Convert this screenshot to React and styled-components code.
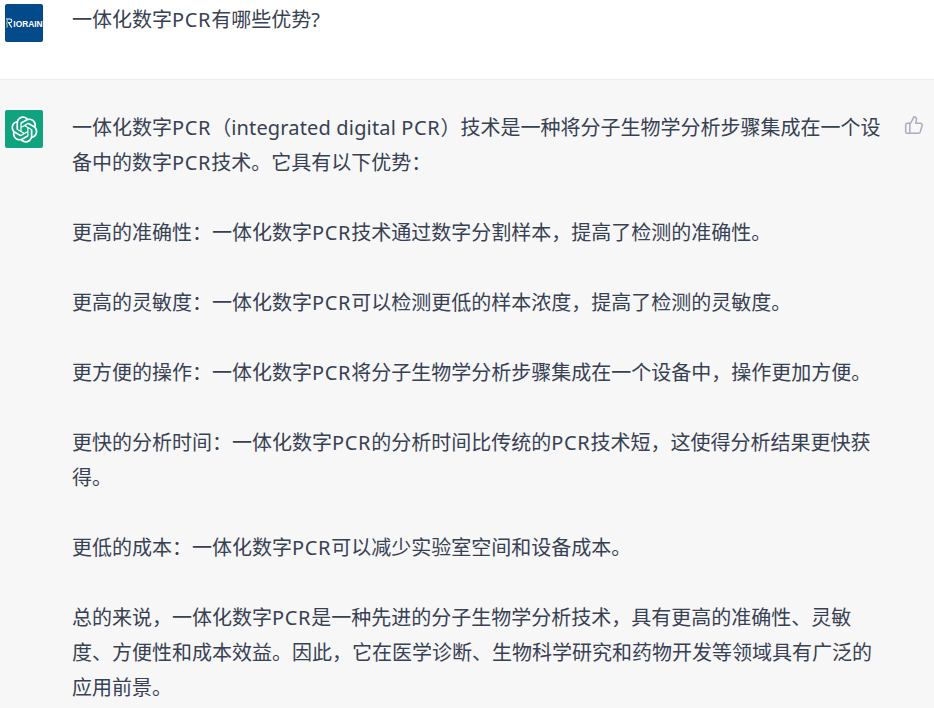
import styled, { createGlobalStyle } from 'styled-components';
import { ThumbsUp } from 'lucide-react';

const GlobalStyle = createGlobalStyle`
  html, body {
    margin: 0;
    padding: 0;
    background: #f7f7f8;
  }
  body {
    width: 934px;
    height: 708px;
    overflow: hidden;
    font-family: 'Noto Sans', 'Noto Sans CJK SC', sans-serif;
    color: #374151;
  }
`;

const Row = styled.div`
  display: flex;
  box-sizing: border-box;
  background: ${props => (props.answer ? '#f7f7f8' : '#ffffff')};
  border-bottom: ${props => (props.answer ? 'none' : '1px solid #ececf1')};
  height: ${props => (props.answer ? 'auto' : '80px')};
  padding: ${props => (props.answer ? '30px 0 0 5px' : '4px 0 0 5px')};
`;

const Avatar = styled.div`
  flex: none;
  width: 38px;
  height: 38px;
  border-radius: 2px;
  display: flex;
  align-items: center;
  justify-content: center;
  color: #ffffff;
  background: ${props => props.bg};
`;

const Brand = styled.span`
  display: flex;
  align-items: flex-end;
  font-family: 'Liberation Sans', sans-serif;
  font-size: 8.4px;
  line-height: 8px;
  font-weight: 700;
  white-space: nowrap;
`;

const Question = styled.div`
  margin: -2px 0 0 29px;
  font-size: 20px;
  line-height: 35px;
`;

const Body = styled.div`
  flex: none;
  width: 812px;
  margin-left: 29px;
  font-size: 20px;
  line-height: 35px;
`;

const Paragraph = styled.p`
  margin: 0 0 35px;
`;

// the latin runs are a little wider in the screenshot than in Noto Sans
const Pcr = styled.span`
  letter-spacing: 0.67px;
`;

const Latin = styled.span`
  letter-spacing: 0.16px;
`;

const Like = styled.div`
  flex: none;
  margin: 5px 0 0 20px;
  color: #acacbe;
  display: flex;
`;

export default function App() {
  return (
    <>
      <GlobalStyle />
      <Row>
        <Avatar bg="#034a8a">
          <Brand>
            <svg width="8" height="10" viewBox="0 0 8 10" fill="none">
              <path d="M1 1 H5 C7.4 1 7.4 4.6 5 4.6 H3.5 L6.8 9.6" stroke="#ffffff" strokeWidth="1.1" />
              <path d="M2 1.5 C3.4 3.4 0.8 5 2 6.8 C2.6 7.8 2.4 8.8 1.6 9.6" stroke="#9fd3a6" strokeWidth="1.1" />
            </svg>
            IORAIN
          </Brand>
        </Avatar>
        <Question>一体化数字<Pcr>PCR</Pcr>有哪些优势?</Question>
      </Row>
      <Row answer>
        <Avatar bg="#10a37f">
          <svg width="27" height="27" viewBox="0 0 41 41" fill="currentColor">
            <path d="M37.5324 16.8707C37.9808 15.5241 38.1363 14.0974 37.9886 12.6859C37.8409 11.2744 37.3934 9.91076 36.676 8.68622C35.6126 6.83404 33.9882 5.3676 32.0373 4.4985C30.0864 3.62941 27.9098 3.40259 25.8215 3.85078C24.8796 2.7893 23.7219 1.94125 22.4257 1.36341C21.1295 0.785575 19.7249 0.491269 18.3058 0.500197C16.1708 0.495044 14.0893 1.16803 12.3614 2.42214C10.6335 3.67624 9.34853 5.44666 8.6917 7.47815C7.30085 7.76286 5.98686 8.3414 4.8377 9.17505C3.68854 10.0087 2.73073 11.0782 2.02839 12.312C0.956464 14.1591 0.498905 16.2988 0.721698 18.4228C0.944492 20.5467 1.83612 22.5449 3.268 24.1293C2.81966 25.4759 2.66413 26.9026 2.81182 28.3141C2.95951 29.7256 3.40701 31.0892 4.12437 32.3138C5.18791 34.1659 6.8123 35.6322 8.76321 36.5013C10.7141 37.3704 12.8907 37.5973 14.9789 37.1492C15.9208 38.2107 17.0786 39.0587 18.3747 39.6366C19.6709 40.2144 21.0755 40.5087 22.4946 40.4998C24.6307 40.5054 26.7133 39.8321 28.4418 38.5772C30.1704 37.3223 31.4556 35.5506 32.1119 33.5179C33.5027 33.2332 34.8167 32.6547 35.9659 31.821C37.115 30.9874 38.0728 29.9178 38.7752 28.684C39.8458 26.8371 40.3023 24.6979 40.0789 22.5748C39.8556 20.4517 38.9639 18.4544 37.5324 16.8707ZM22.4978 37.8849C20.7443 37.8874 19.0459 37.2733 17.6994 36.1501C17.7601 36.117 17.8666 36.0586 17.936 36.0161L25.9004 31.4156C26.1003 31.3019 26.2663 31.137 26.3813 30.9378C26.4964 30.7386 26.5563 30.5124 26.5549 30.2825V19.0542L29.9213 20.998C29.9389 21.0068 29.9541 21.0198 29.9656 21.0359C29.977 21.052 29.9842 21.0707 29.9867 21.0902V30.3889C29.9842 32.375 29.1946 34.2791 27.7909 35.6841C26.3872 37.0892 24.4838 37.8806 22.4978 37.8849ZM6.39227 31.0064C5.51397 29.4888 5.19742 27.7107 5.49804 25.9832C5.55718 26.0187 5.66048 26.0818 5.73461 26.1244L13.699 30.7248C13.8975 30.8408 14.1233 30.902 14.3532 30.902C14.583 30.902 14.8088 30.8408 15.0073 30.7248L24.731 25.1103V28.9979C24.7321 29.0177 24.7283 29.0376 24.7199 29.0556C24.7115 29.0736 24.6988 29.0893 24.6829 29.1012L16.6317 33.7497C14.9096 34.7416 12.8643 35.0097 10.9447 34.4954C9.02506 33.9811 7.38785 32.7263 6.39227 31.0064ZM4.29707 13.6194C5.17156 12.0998 6.55279 10.9364 8.19885 10.3327C8.19885 10.4013 8.19491 10.5228 8.19491 10.6071V19.808C8.19351 20.0378 8.25334 20.2638 8.36823 20.4629C8.48312 20.6619 8.64893 20.8267 8.84863 20.9404L18.5723 26.5542L15.206 28.4979C15.1894 28.5089 15.1703 28.5155 15.1505 28.5173C15.1307 28.5191 15.1107 28.516 15.0924 28.5082L7.04046 23.8557C5.32135 22.8601 4.06716 21.2235 3.55289 19.3046C3.03862 17.3858 3.30624 15.3413 4.29707 13.6194ZM31.955 20.0556L22.2312 14.4411L25.5976 12.4981C25.6142 12.4872 25.6333 12.4805 25.6531 12.4787C25.6729 12.4769 25.6928 12.4801 25.7111 12.4879L33.7631 17.1364C34.9967 17.849 36.0017 18.8982 36.6606 20.1613C37.3194 21.4244 37.6047 22.849 37.4832 24.2684C37.3617 25.6878 36.8382 27.0432 35.9743 28.1759C35.1103 29.3086 33.9415 30.1717 32.6047 30.6641C32.6047 30.5947 32.6047 30.4733 32.6047 30.3889V21.188C32.6066 20.9586 32.5474 20.7328 32.4332 20.5338C32.319 20.3348 32.154 20.1698 31.955 20.0556ZM35.3055 15.0128C35.2464 14.9765 35.1431 14.9142 35.069 14.8717L27.1045 10.2712C26.906 10.1554 26.6803 10.0943 26.4504 10.0943C26.2206 10.0943 25.9948 10.1554 25.7963 10.2712L16.0726 15.8858V11.9982C16.0715 11.9783 16.0753 11.9585 16.0837 11.9405C16.0921 11.9225 16.1048 11.9068 16.1207 11.8949L24.1719 7.25025C25.4053 6.53903 26.8158 6.19376 28.2383 6.25482C29.6608 6.31589 31.0364 6.78077 32.2044 7.59508C33.3723 8.40939 34.2842 9.53945 34.8334 10.8531C35.3826 12.1667 35.5464 13.6095 35.3055 15.0128ZM14.2424 21.9419L10.8752 19.9981C10.8576 19.9893 10.8423 19.9763 10.8309 19.9602C10.8195 19.9441 10.8122 19.9254 10.8098 19.9058V10.6071C10.8107 9.18295 11.2173 7.78848 11.9819 6.58696C12.7466 5.38544 13.8377 4.42659 15.1275 3.82264C16.4173 3.21869 17.8524 2.99464 19.2649 3.1767C20.6775 3.35876 22.0089 3.93941 23.1034 4.85067C23.0427 4.88379 22.937 4.94215 22.8668 4.98473L14.9024 9.58517C14.7025 9.69878 14.5366 9.86356 14.4215 10.0626C14.3065 10.2616 14.2466 10.4877 14.2479 10.7175L14.2424 21.9419ZM16.071 17.9991L20.4018 15.4978L24.7325 17.9975V22.9985L20.4018 25.4983L16.071 22.9985V17.9991Z" />
          </svg>
        </Avatar>
        <Body>
          <Paragraph>一体化数字<Pcr>PCR</Pcr>（<Latin>integrated digital</Latin> <Pcr>PCR</Pcr>）技术是一种将分子生物学分析步骤集成在一个设备中的数字<Pcr>PCR</Pcr>技术。它具有以下优势：</Paragraph>
          <Paragraph>更高的准确性：一体化数字<Pcr>PCR</Pcr>技术通过数字分割样本，提高了检测的准确性。</Paragraph>
          <Paragraph>更高的灵敏度：一体化数字<Pcr>PCR</Pcr>可以检测更低的样本浓度，提高了检测的灵敏度。</Paragraph>
          <Paragraph>更方便的操作：一体化数字<Pcr>PCR</Pcr>将分子生物学分析步骤集成在一个设备中，操作更加方便。</Paragraph>
          <Paragraph>更快的分析时间：一体化数字<Pcr>PCR</Pcr>的分析时间比传统的<Pcr>PCR</Pcr>技术短，这使得分析结果更快获得。</Paragraph>
          <Paragraph>更低的成本：一体化数字<Pcr>PCR</Pcr>可以减少实验室空间和设备成本。</Paragraph>
          <Paragraph>总的来说，一体化数字<Pcr>PCR</Pcr>是一种先进的分子生物学分析技术，具有更高的准确性、灵敏度、方便性和成本效益。因此，它在医学诊断、生物科学研究和药物开发等领域具有广泛的应用前景。</Paragraph>
        </Body>
        <Like>
          <ThumbsUp size={20} strokeWidth={1.8} />
        </Like>
      </Row>
    </>
  );
}
